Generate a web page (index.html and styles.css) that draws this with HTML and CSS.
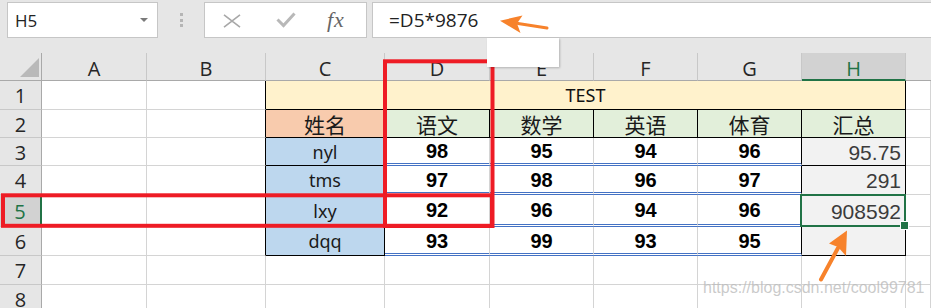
FILE: index.html
```html
<!DOCTYPE html>
<html>
<head>
<meta charset="utf-8">
<link rel="stylesheet" href="styles.css">
</head>
<body>
<div class="toolbar">
  <div class="namebox"><span class="name">H5</span><span class="dd"></span></div>
  <div class="grip"><i></i><i></i><i></i></div>
  <div class="fbtns">
    <svg class="ico-x" width="18" height="14" viewBox="0 0 18 14"><path d="M1 0.8 L17 13.2 M17 0.8 L1 13.2" stroke="#a8a8a8" stroke-width="1.6" fill="none"/></svg>
    <svg class="ico-ok" width="20" height="16" viewBox="0 0 20 16"><path d="M1.5 7.5 L7.5 13.5 L18.5 1.5" stroke="#b8b8b8" stroke-width="3" fill="none"/></svg>
    <span class="fx">fx</span>
  </div>
  <div class="finput">=D5*9876</div>
</div>

<div class="sheet">
  <div class="corner"><svg width="42" height="28" viewBox="0 0 42 28"><path d="M20 24 L39 24 L39 5 Z" fill="#b9b9b9"/></svg></div>
  <div class="ch">A</div><div class="ch">B</div><div class="ch">C</div><div class="ch">D</div><div class="ch">E</div><div class="ch">F</div><div class="ch">G</div><div class="ch ch-sel">H</div><div class="ch ch-last"></div>

  <div class="rh">1</div><div class="c"></div><div class="c bkr"></div><div class="c test">TEST</div><div class="c"></div>

  <div class="rh">2</div><div class="c"></div><div class="c bkr"></div><div class="c hn">姓名</div><div class="c hs">语文</div><div class="c hs">数学</div><div class="c hs">英语</div><div class="c hs">体育</div><div class="c hs">汇总</div><div class="c"></div>

  <div class="rh">3</div><div class="c"></div><div class="c bkr"></div><div class="c nm">nyl</div><div class="c sc">98</div><div class="c sc">95</div><div class="c sc">94</div><div class="c sc sg">96</div><div class="c tot">95.75</div><div class="c"></div>

  <div class="rh">4</div><div class="c"></div><div class="c bkr"></div><div class="c nm">tms</div><div class="c sc">97</div><div class="c sc">98</div><div class="c sc">96</div><div class="c sc sg">97</div><div class="c tot">291</div><div class="c"></div>

  <div class="rh rh-sel">5</div><div class="c"></div><div class="c bkr"></div><div class="c nm">lxy</div><div class="c sc">92</div><div class="c sc">96</div><div class="c sc">94</div><div class="c sc sg">96</div><div class="c tot tot-sel">908592</div><div class="c"></div>

  <div class="rh">6</div><div class="c"></div><div class="c bkr"></div><div class="c nm">dqq</div><div class="c sc">93</div><div class="c sc">99</div><div class="c sc">93</div><div class="c sc sg">95</div><div class="c tot"></div><div class="c"></div>

  <div class="rh">7</div><div class="c"></div><div class="c"></div><div class="c"></div><div class="c"></div><div class="c"></div><div class="c"></div><div class="c"></div><div class="c"></div><div class="c"></div>

  <div class="rh">8</div><div class="c"></div><div class="c"></div><div class="c"></div><div class="c"></div><div class="c"></div><div class="c"></div><div class="c"></div><div class="c"></div><div class="c"></div>
</div>

<svg class="overlay" width="931" height="308" viewBox="0 0 931 308">
  <rect x="385" y="61.3" width="107.5" height="164.7" fill="none" stroke="#ee1c25" stroke-width="4"/>
  <rect x="3" y="195.3" width="489" height="30.5" fill="none" stroke="#ee1c25" stroke-width="4"/>
  <path d="M547 28 L518 23.5" stroke="#f7822b" stroke-width="3" stroke-linecap="round" fill="none"/>
  <path d="M500 20.7 L522.5 15.5 L517 23.5 L520.5 33 Z" fill="#f7822b"/>
  <path d="M821 279.5 L838 248" stroke="#f7822b" stroke-width="4" stroke-linecap="round" fill="none"/>
  <path d="M847 230.5 L829 243.5 L838 247 L846 256 Z" fill="#f7822b"/>
</svg>
<div class="popup"></div>
<div class="wm">https://blog.csdn.net/cool99781</div>
</body>
</html>
```

FILE: styles.css
```css
* { box-sizing: border-box; margin: 0; padding: 0; }

body {
  width: 931px;
  height: 308px;
  overflow: hidden;
  background: #fff;
  font-family: "Open Sans", "Noto Sans", sans-serif;
  position: relative;
}

/* ---------- formula toolbar ---------- */
.toolbar {
  height: 53px;
  background: #e6e6e6;
  display: flex;
  align-items: flex-start;
  padding-top: 2px;
}

.namebox {
  margin-left: 7px;
  width: 151px;
  height: 36px;
  background: #fff;
  border: 1px solid #c6c6c6;
  display: flex;
  align-items: center;
  justify-content: space-between;
  padding: 0 9px 0 7px;
}

.name { font-size: 17px; color: #222; }

.dd {
  width: 0;
  height: 0;
  border-left: 4px solid transparent;
  border-right: 4px solid transparent;
  border-top: 4px solid #7a7a7a;
}

.grip {
  width: 46px;
  display: flex;
  flex-direction: column;
  align-items: center;
  gap: 2.5px;
  padding-top: 11px;
}
.grip i {
  display: block;
  width: 3px;
  height: 3px;
  background: #b5b5b5;
}

.fbtns {
  width: 163px;
  height: 36px;
  background: #fff;
  border: 1px solid #c6c6c6;
  display: flex;
  align-items: center;
  padding-left: 18px;
}
.ico-x { display: block; margin-top: 1px; }
.ico-ok { display: block; margin-left: 35px; }
.fx {
  margin-left: 31px;
  font-family: "Liberation Serif", serif;
  font-style: italic;
  font-size: 22px;
  letter-spacing: 1px;
  color: #666;
  margin-top: -1px;
}

.finput {
  margin-left: 5px;
  flex: 1;
  height: 36px;
  background: #fff;
  border: 1px solid #c6c6c6;
  border-right: none;
  display: flex;
  align-items: center;
  padding-left: 16px;
  font-size: 19px;
  color: #222;
}

/* ---------- sheet grid ---------- */
.sheet {
  display: grid;
  grid-template-columns: 42px 105px 119px 119px 105px 104px 104px 104px 104px 25px;
  grid-template-rows: 28px 29px 28px 28px 29px 32px 29px 29px 29px;
}

.corner {
  background: #e6e6e6;
  border-right: 1px solid #a9a9a9;
  border-bottom: 1px solid #a9a9a9;
}
.corner svg { display: block; }

.ch {
  background: #e6e6e6;
  border-right: 1px solid #c8c8c8;
  border-bottom: 1px solid #a9a9a9;
  display: flex;
  align-items: center;
  justify-content: center;
  padding-top: 3px;
  font-size: 20px;
  color: #262626;
}
.ch-sel {
  background: #d2d2d2;
  color: #217346;
  border-bottom: 2px solid #217346;
  padding-top: 4px;
}
.ch-last { border-right: none; }

.rh {
  background: #e6e6e6;
  border-right: 1px solid #a9a9a9;
  border-bottom: 1px solid #c8c8c8;
  display: flex;
  align-items: center;
  justify-content: center;
  font-size: 20px;
  color: #262626;
  padding-top: 1px;
}
.rh-sel {
  background: #d2d2d2;
  color: #217346;
  border-right: 2px solid #217346;
}

.c {
  border-right: 1px solid #d4d4d4;
  border-bottom: 1px solid #d4d4d4;
  display: flex;
  align-items: center;
  justify-content: center;
  color: #111;
  white-space: nowrap;
}
.bkr { border-right-color: #000; }

.test {
  grid-column: span 6;
  background: #fff2cc;
  border-right-color: #000;
  border-bottom-color: #000;
  font-family: "Noto Sans", sans-serif;
  font-size: 18px;
}

.hn, .hs {
  border-right-color: #000;
  border-bottom-color: #000;
  font-family: "Noto Sans CJK SC", sans-serif;
  font-size: 21px;
  color: #1a1a1a;
}
.hn { background: #f8cbad; }
.hs { background: #e2efda; }

.nm {
  background: #bdd7ee;
  border-right-color: #000;
  border-bottom-color: #000;
  font-family: "Noto Sans", sans-serif;
  font-size: 18px;
  color: #1a1a1a;
}

.sc {
  border-bottom: 3px double #4472c4;
  font-family: "Liberation Sans", Arial, sans-serif;
  font-weight: bold;
  font-size: 20px;
  color: #000;
  padding-top: 2px;
}
.sg { border-right-color: #000; }

.tot {
  background: #f2f2f2;
  border-right-color: #000;
  border-bottom-color: #000;
  justify-content: flex-end;
  padding-right: 4px;
  padding-top: 2px;
  font-family: "Liberation Sans", Arial, sans-serif;
  font-size: 21px;
  color: #3b3b3b;
}
.tot-sel { position: relative; }
.tot-sel::before {
  content: "";
  position: absolute;
  left: -2px;
  top: -1px;
  right: -1px;
  bottom: -1px;
  border: 2px solid #217346;
}
.tot-sel::after {
  content: "";
  position: absolute;
  right: -4px;
  bottom: -4px;
  width: 7px;
  height: 7px;
  background: #217346;
  border: 1px solid #fff;
}

/* ---------- overlays ---------- */
.overlay {
  position: absolute;
  left: 0;
  top: 0;
  pointer-events: none;
}

.popup {
  position: absolute;
  left: 487px;
  top: 38px;
  width: 72px;
  height: 29px;
  background: #fff;
  box-shadow: 1px 1px 2px rgba(0, 0, 0, 0.22);
}

.wm {
  position: absolute;
  left: 703px;
  top: 280px;
  font-family: "Liberation Sans", Arial, sans-serif;
  font-size: 16px;
  line-height: 16px;
  color: rgba(185, 185, 185, 0.75);
  white-space: nowrap;
}
```
